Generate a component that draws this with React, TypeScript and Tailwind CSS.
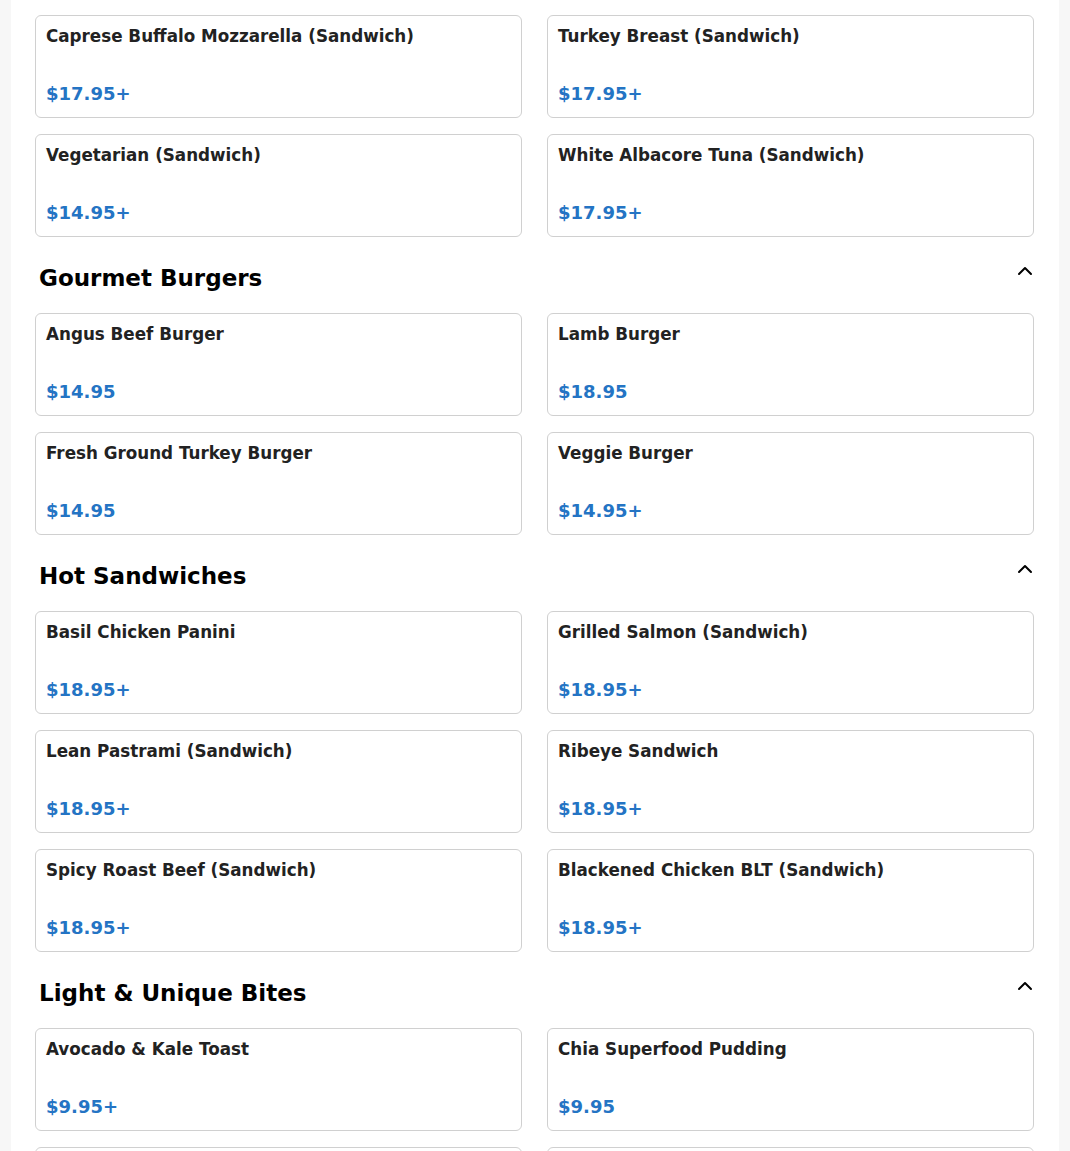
import { ChevronUp } from 'lucide-react';

type Item = { name: string; price: string };

const topItems: Item[] = [
  { name: 'Caprese Buffalo Mozzarella (Sandwich)', price: '$17.95+' },
  { name: 'Turkey Breast (Sandwich)', price: '$17.95+' },
  { name: 'Vegetarian (Sandwich)', price: '$14.95+' },
  { name: 'White Albacore Tuna (Sandwich)', price: '$17.95+' },
];

const sections: { title: string; items: Item[] }[] = [
  {
    title: 'Gourmet Burgers',
    items: [
      { name: 'Angus Beef Burger', price: '$14.95' },
      { name: 'Lamb Burger', price: '$18.95' },
      { name: 'Fresh Ground Turkey Burger', price: '$14.95' },
      { name: 'Veggie Burger', price: '$14.95+' },
    ],
  },
  {
    title: 'Hot Sandwiches',
    items: [
      { name: 'Basil Chicken Panini', price: '$18.95+' },
      { name: 'Grilled Salmon (Sandwich)', price: '$18.95+' },
      { name: 'Lean Pastrami (Sandwich)', price: '$18.95+' },
      { name: 'Ribeye Sandwich', price: '$18.95+' },
      { name: 'Spicy Roast Beef (Sandwich)', price: '$18.95+' },
      { name: 'Blackened Chicken BLT (Sandwich)', price: '$18.95+' },
    ],
  },
  {
    title: 'Light & Unique Bites',
    items: [
      { name: 'Avocado & Kale Toast', price: '$9.95+' },
      { name: 'Chia Superfood Pudding', price: '$9.95' },
      { name: 'Greek Yogurt Parfait', price: '$9.95' },
      { name: 'Fresh Fruit Bowl', price: '$9.95' },
    ],
  },
];

function Card({ item }: { item: Item }) {
  return (
    <div className="h-[103px] rounded-md border border-[#d0d0d0] bg-white pl-[10px] pr-[10px] pt-[10px] pb-[12px] flex flex-col justify-between">
      <div className="text-[16.75px] font-bold leading-[20px] text-[#222]">{item.name}</div>
      <div className="text-[18px] font-bold leading-[22px] text-[#2474c4]">{item.price}</div>
    </div>
  );
}

function Grid({ items }: { items: Item[] }) {
  return (
    <div className="grid grid-cols-2 gap-x-[25px] gap-y-4">
      {items.map((it) => (
        <Card key={it.name} item={it} />
      ))}
    </div>
  );
}

export default function App() {
  return (
    <div className="h-[1151px] overflow-hidden bg-[#f7f7f7] font-['DejaVu_Sans',sans-serif]">
      <div className="mx-[11px] bg-white pl-6 pr-[25px] pt-[15px] pb-10 min-h-full">
        <Grid items={topItems} />
        {sections.map((s) => (
          <section key={s.title}>
            <div className="mt-[28px] mb-[22px] flex items-start justify-between pl-1">
              <h2 className="text-[23px] font-bold leading-[26px] text-black">{s.title}</h2>
              <ChevronUp className="mt-[-6px] mr-[-3px] h-6 w-6 text-black" strokeWidth={2} />
            </div>
            <Grid items={s.items} />
          </section>
        ))}
      </div>
    </div>
  );
}
